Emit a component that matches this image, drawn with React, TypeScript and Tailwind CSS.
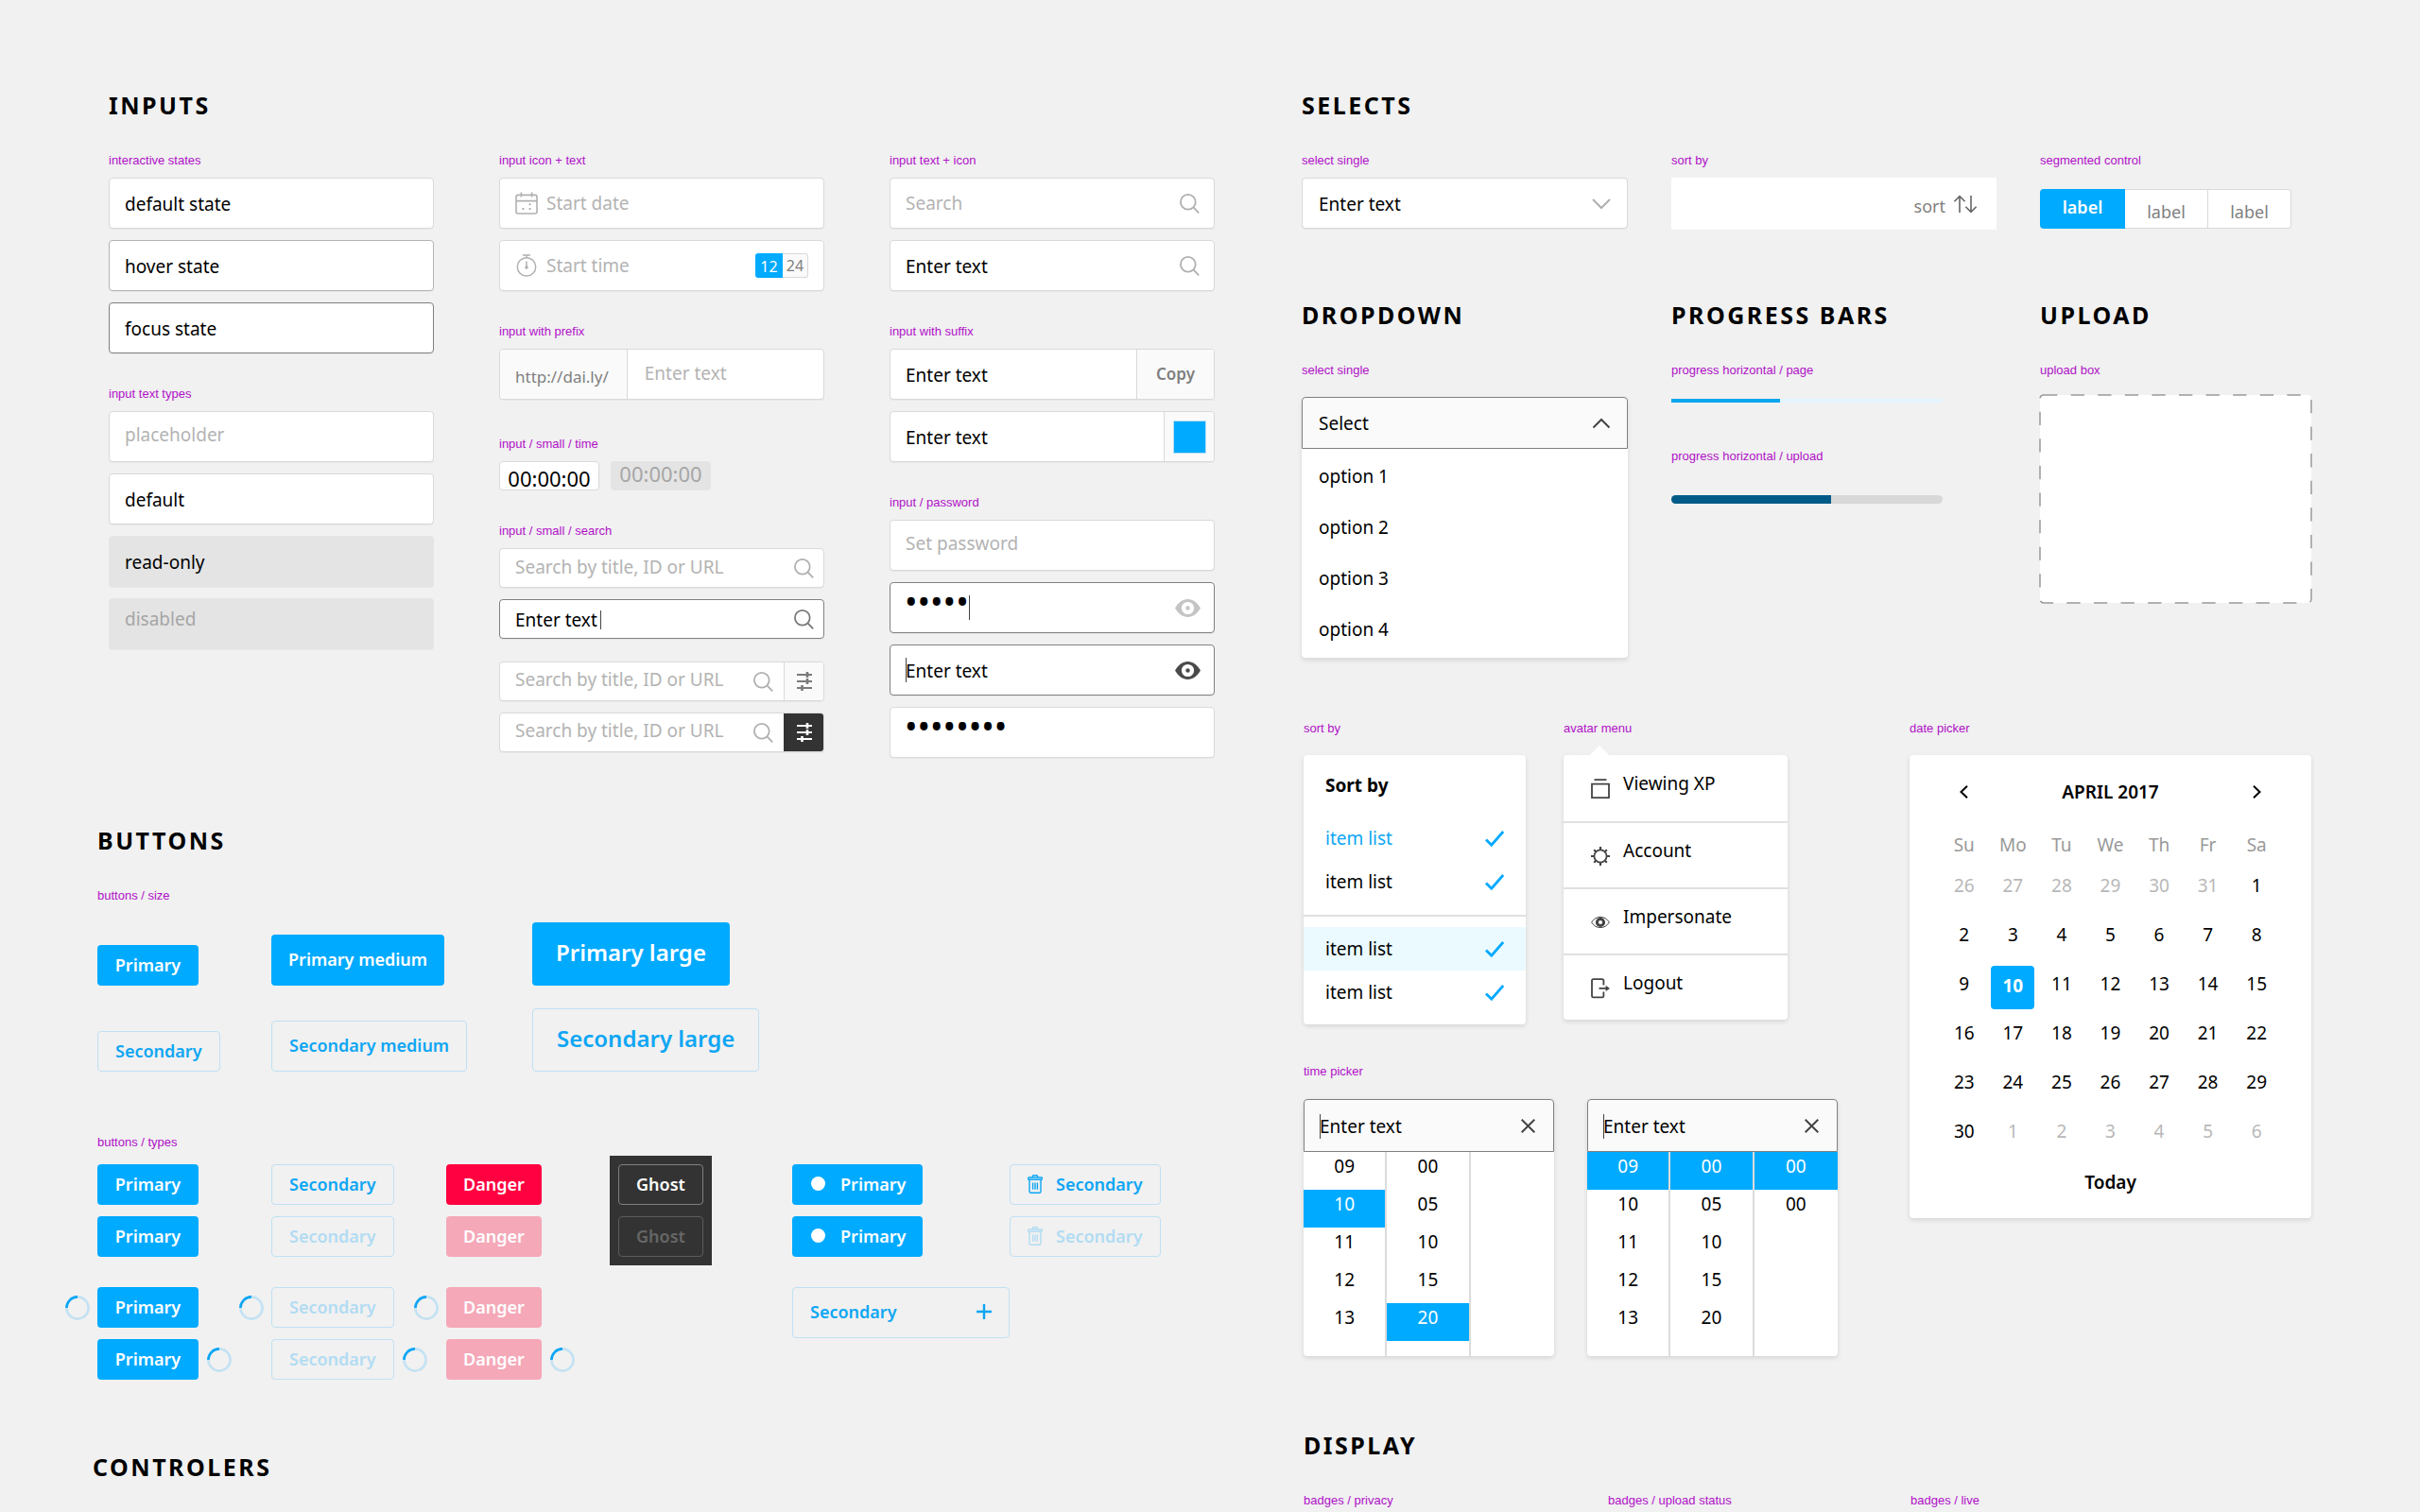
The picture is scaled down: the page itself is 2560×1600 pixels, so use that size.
import type { ReactNode } from 'react';
import clsx from 'clsx';

/* ---------- icons ---------- */

function SearchIcon({ className }: { className?: string }) {
  return (
    <svg aria-hidden viewBox="0 0 21 21" className={clsx('h-[21px] w-[21px] flex-none', className)} fill="none" stroke="currentColor" strokeWidth="1.8">
      <circle cx="8.8" cy="8.8" r="7.9" />
      <path d="M14.2 14.2l6 6.2" />
    </svg>
  );
}

function CalendarIcon() {
  return (
    <svg aria-hidden viewBox="0 0 24 24" className="h-6 w-6 flex-none text-[#b0b0b0]" fill="none" stroke="currentColor" strokeWidth="1.6">
      <rect x="1" y="3.4" width="22" height="19.6" rx="2" />
      <path d="M1 9.6h22M6.4 .6v5M17.6 .6v5" />
      <path d="M14.6 13.2h2M14.6 18h2M7.4 18h2" strokeWidth="2" />
    </svg>
  );
}

function StopwatchIcon() {
  return (
    <svg aria-hidden viewBox="0 0 24 24" className="h-6 w-6 flex-none text-[#b0b0b0]" fill="none" stroke="currentColor" strokeWidth="1.5">
      <circle cx="12" cy="13.4" r="9.7" />
      <path d="M8 1h8M12 1v3M12 7.5v6" />
      <circle cx="12" cy="14" r="1.8" fill="currentColor" stroke="none" />
    </svg>
  );
}

function SlidersIcon() {
  return (
    <svg aria-hidden viewBox="0 0 16 20" className="h-5 w-4" fill="none" stroke="currentColor" strokeWidth="2">
      <path d="M0 3h16M0 10h16M0 17h16" />
      <path d="M11 0v6M11 7v6M5.5 14v6" strokeWidth="2.6" />
    </svg>
  );
}

function EyeIcon({ className }: { className: string }) {
  return (
    <svg aria-hidden viewBox="0 0 27 19" className={clsx('h-[19px] w-[27px] flex-none', className)} fill="currentColor">
      <path
        fillRule="evenodd"
        d="M0 9.5C3.4 3.6 8 0 13.5 0S23.6 3.6 27 9.5C23.6 15.4 19 19 13.5 19S3.4 15.4 0 9.5zM13.5 2.9a6.6 6.6 0 100 13.2 6.6 6.6 0 000-13.2z"
      />
      <circle cx="13.5" cy="9.5" r="2.2" />
    </svg>
  );
}

function Chevron({ d, className }: { d: string; className: string }) {
  return (
    <svg aria-hidden viewBox="0 0 20 12" className={clsx('h-3 w-5 flex-none', className)} fill="none" stroke="currentColor" strokeWidth="2">
      <path d={d} />
    </svg>
  );
}

function CheckIcon() {
  return (
    <svg aria-hidden viewBox="0 0 20 17" className="h-[17px] w-5 text-[#00aaff]" fill="none" stroke="currentColor" strokeWidth="2.8">
      <path d="M1 9.4l5.8 5.8L19.2 1" />
    </svg>
  );
}

function TrashIcon() {
  return (
    <svg aria-hidden viewBox="0 0 16 20" className="h-5 w-4" fill="none" stroke="currentColor" strokeWidth="1.4">
      <path d="M5.4 3V1.6c0-.5.4-.9.9-.9h3.4c.5 0 .9.4.9.9V3" />
      <rect x=".7" y="3" width="14.6" height="2.2" rx=".6" />
      <path d="M2 5.4v12.4c0 .9.6 1.5 1.5 1.5h9c.9 0 1.500-.6 1.500-1.500V5.400M5.600 8.400v7.400M8 8.400v7.400M10.400 8.400v7.400" />
    </svg>
  );
}

function Spinner() {
  return (
    <svg aria-hidden viewBox="0 0 26 26" className="h-[26px] w-[26px] flex-none" fill="none" strokeWidth="2.6">
      <circle cx="13" cy="13" r="11.6" stroke="#c3e2f3" />
      <path d="M1.4 13A11.6 11.6 0 0113 1.4" stroke="#0ba6f5" />
    </svg>
  );
}

const menuIcons: Record<string, ReactNode> = {
  'Viewing XP': <path d="M3.5 1.2h13M1 5.6h18v14.6H1z" strokeWidth="1.8" />,
  Account: (
    <>
      <circle cx="10" cy="11" r="6.6" strokeWidth="1.8" />
      <path d="M10 1v3M10 18v3M0 11h3M17 11h3M3.2 4.2l2 2M14.8 15.8l2 2M16.8 4.2l-2 2M5.2 15.8l-2 2" strokeWidth="2.2" />
    </>
  ),
  Impersonate: (
    <>
      <path d="M.6 11C3 7.3 6.2 5.400 10 5.400s7 1.900 9.400 5.600C17 14.700 13.800 16.600 10 16.600S3 14.700 .6 11z" strokeWidth="1" />
      <circle cx="10" cy="11" r="3.600" strokeWidth="3" />
    </>
  ),
  Logout: (
    <>
      <path d="M13.400 7.400V2.600c0-.9-.6-1.500-1.500-1.500H2.500C1.600 1.100 1 1.700 1 2.600v16.300c0 .9.6 1.500 1.500 1.500h9.400c.9 0 1.500-.6 1.500-1.500v-4.500" strokeWidth="1.8" />
      <path d="M8.500 10.900h8" strokeWidth="1.8" />
      <path d="M15.600 7.700l4.400 3.200-4.400 3.200z" fill="currentColor" stroke="none" />
    </>
  ),
};

/* ---------- shared pieces ---------- */

function Heading({ children }: { children: ReactNode }) {
  return <h2 className="mb-[35px] text-[25px] leading-8 font-bold tracking-widest text-black">{children}</h2>;
}

function Caption({ children, className = 'mb-[10px]' }: { children: ReactNode; className?: string }) {
  return <p className={clsx("font-['Liberation_Sans',sans-serif] text-[13px] leading-4 text-[#b010c8]", className)}>{children}</p>;
}

function Group({ caption, className, captionClass, children }: { caption: string; className?: string; captionClass?: string; children: ReactNode }) {
  return (
    <div className={className}>
      <Caption className={captionClass}>{caption}</Caption>
      {children}
    </div>
  );
}

const tones = {
  normal: 'border-[#d9d9d9] bg-white',
  hover: 'border-[#b3b3b3] bg-white',
  focus: 'border-[#808080] bg-white',
  muted: 'border-[#e4e4e4] bg-[#e4e4e4]',
};

/** Bordered shell; the input inside grows to fill it. */
function Field({ tone = 'normal', small, children }: { tone?: keyof typeof tones; small?: boolean; children: ReactNode }) {
  return (
    <div className={clsx('relative flex items-stretch overflow-hidden rounded-[4px] border shadow-[0_1px_0_rgba(0,0,0,0.04)]', small ? 'h-[42px]' : 'h-[54px]', tones[tone])}>
      {children}
    </div>
  );
}

type TextProps = { label: string; value?: string; placeholder?: string; type?: string; className?: string; disabled?: boolean; readOnly?: boolean };

function Text({ label, value, placeholder, type = 'text', className = 'pt-0.5 pl-4', disabled, readOnly }: TextProps) {
  return (
    <input
      type={type}
      aria-label={label}
      defaultValue={value}
      placeholder={placeholder}
      disabled={disabled}
      readOnly={readOnly}
      className={clsx('min-w-0 flex-1 bg-transparent outline-none placeholder:text-[#b3b3b3] placeholder:opacity-100', className)}
    />
  );
}

function Caret({ className }: { className: string }) {
  return <span aria-hidden className={clsx('absolute w-px bg-[#444]', className)} />;
}

/* ---------- inputs ---------- */

function Inputs() {
  return (
    <section className="pl-[17px]">
      <Heading>INPUTS</Heading>
      <div className="grid grid-cols-3 gap-[69px]">
        <div>
          <Group caption="interactive states">
            <div className="flex flex-col gap-3">
              <Field><Text label="Default" value="default state" /></Field>
              <Field tone="hover"><Text label="Hover" value="hover state" /></Field>
              <Field tone="focus"><Text label="Focus" value="focus state" /></Field>
            </div>
          </Group>
          <Group caption="input text types" className="mt-[35px]">
            <div className="flex flex-col gap-3">
              <Field><Text label="Placeholder" placeholder="placeholder" className="pb-1 pl-4" /></Field>
              <Field><Text label="Default type" value="default" /></Field>
              <Field tone="muted"><Text label="Read-only" value="read-only" readOnly /></Field>
              <Field tone="muted"><Text label="Disabled" value="disabled" disabled className="pb-2.5 pl-4 text-[#a6a6a6]" /></Field>
            </div>
          </Group>
        </div>

        <div>
          <Group caption="input icon + text">
            <div className="flex flex-col gap-3">
              <Field>
                <div className="flex min-w-0 flex-1 items-center gap-[9px] px-4">
                  <CalendarIcon />
                  <Text label="Start date" placeholder="Start date" className="" />
                </div>
              </Field>
              <Field>
                <div className="flex min-w-0 flex-1 items-center gap-[9px] px-4">
                  <StopwatchIcon />
                  <Text label="Start time" placeholder="Start time" className="" />
                  <div className="flex h-[26px] flex-none text-base leading-6">
                    <button type="button" className="w-[29px] rounded-l-[3px] bg-[#00aaff] pt-0.5 text-white">12</button>
                    <button type="button" className="w-[27px] rounded-r-[3px] border border-l-0 border-[#d9d9d9] bg-[#fafafa] text-[#7f7f7f]">24</button>
                  </div>
                </div>
              </Field>
            </div>
          </Group>
          <Group caption="input with prefix" className="mt-[35px]">
            <Field>
              <span className="flex items-center border-r border-[#d9d9d9] bg-[#fafafa] pt-1.5 pr-[19px] pl-4 text-[17px] text-[#7f7f7f]">http://dai.ly/</span>
              <Text label="Path" placeholder="Enter text" className="pb-0.5 pl-[18px]" />
            </Field>
          </Group>
          <Group caption="input / small / time" className="mt-[39px]">
            <div className="flex gap-3 text-[22px]">
              <input aria-label="Time" defaultValue="00:00:00" className="h-[31px] w-[106px] rounded-[4px] border border-[#d9d9d9] bg-white pt-1 text-center outline-none" />
              <input aria-label="Time disabled" defaultValue="00:00:00" disabled className="h-[31px] w-[106px] rounded-[4px] bg-[#e4e4e4] pb-1.5 text-center text-[#a6a6a6] outline-none" />
            </div>
          </Group>
          <Group caption="input / small / search" className="mt-[35px]">
            <div className="flex flex-col gap-3">
              <Field small>
                <Text label="Search" placeholder="Search by title, ID or URL" className="pb-0.5 pl-4" />
                <SearchIcon className="mr-[10px] self-center text-[#b0b0b0]" />
              </Field>
              <Field small tone="focus">
                <Text label="Search focused" value="Enter text" className="pt-0.5 pl-4" />
                <Caret className="top-[11px] left-[106px] h-5" />
                <SearchIcon className="mr-[10px] self-center text-[#7a7a7a]" />
              </Field>
            </div>
            <div className="mt-6 flex flex-col gap-3">
              <Field small>
                <Text label="Search with filter" placeholder="Search by title, ID or URL" className="pb-1 pl-4" />
                <SearchIcon className="mr-[11px] self-center text-[#b0b0b0]" />
                <button type="button" aria-label="Filter" className="grid w-[42px] place-items-center border-l border-[#d9d9d9] bg-[#fafafa] text-[#7a7a7a]">
                  <SlidersIcon />
                </button>
              </Field>
              <Field small>
                <Text label="Search with active filter" placeholder="Search by title, ID or URL" className="pb-1 pl-4" />
                <SearchIcon className="mr-[11px] self-center text-[#b0b0b0]" />
                <button type="button" aria-label="Filter active" className="-my-px -mr-px grid w-[43px] place-items-center bg-[#333] text-white">
                  <SlidersIcon />
                </button>
              </Field>
            </div>
          </Group>
        </div>

        <div>
          <Group caption="input text + icon">
            <div className="flex flex-col gap-3">
              <Field>
                <Text label="Search text" placeholder="Search" className="pl-4" />
                <SearchIcon className="mr-[15px] self-center text-[#b0b0b0]" />
              </Field>
              <Field>
                <Text label="Search value" value="Enter text" />
                <SearchIcon className="mr-[15px] self-center text-[#b0b0b0]" />
              </Field>
            </div>
          </Group>
          <Group caption="input with suffix" className="mt-[35px]">
            <div className="flex flex-col gap-3">
              <Field>
                <Text label="Link" value="Enter text" />
                <button type="button" className="w-[82px] border-l border-[#d9d9d9] bg-[#fafafa] text-[17px] font-semibold text-[#7f7f7f]">Copy</button>
              </Field>
              <Field>
                <Text label="Color" value="Enter text" />
                <button type="button" aria-label="Pick color" className="grid w-[53px] place-items-center border-l border-[#d9d9d9] bg-[#fafafa]">
                  <span className="h-[35px] w-[35px] border border-[#b5dff5] bg-[#00aaff]" />
                </button>
              </Field>
            </div>
          </Group>
          <Group caption="input / password" className="mt-[35px]">
            <div className="flex flex-col gap-3">
              <Field><Text label="Set password" placeholder="Set password" className="pb-1 pl-4" /></Field>
              <Field tone="focus">
                <Text label="Password typing" type="password" value="12345" className="pb-3 pl-[15px] text-4xl" />
                <Caret className="top-[13px] left-[83px] h-[26px]" />
                <EyeIcon className="mr-[14px] self-center text-[#c4c4c4]" />
              </Field>
              <Field tone="focus">
                <Text label="Password shown" value="Enter text" />
                <Caret className="top-[13px] left-4 h-[26px]" />
                <EyeIcon className="mr-[14px] self-center text-[#4a4a4a]" />
              </Field>
              <Field><Text label="Password" type="password" value="12345678" className="pb-3 pl-[15px] text-4xl" /></Field>
            </div>
          </Group>
        </div>
      </div>
    </section>
  );
}

/* ---------- buttons ---------- */

const variants = {
  primary: 'min-w-[107px] bg-[#00aaff] text-white',
  secondary: 'border border-[#bfe1f3] text-[#0ea6f4]',
  secondaryOff: 'border border-[#bfe1f3] text-[#b2dcf3]',
  danger: 'bg-[#ff0040] text-white',
  dangerOff: 'bg-[#f5a8b8] text-white',
  ghost: 'border border-[#808080] text-white',
  ghostOff: 'border border-[#5c5c5c] text-[#666]',
};

const sizes = {
  small: 'h-[43px] px-[18px] pb-0.5 text-[18px]',
  medium: 'h-[54px] px-[18px] pb-0.5 text-[18px]',
  large: 'h-[67px] px-[25px] pb-1 text-2xl',
};

function Button({ variant = 'primary', size = 'small', justify = 'justify-center', className, disabled, children }: {
  variant?: keyof typeof variants;
  size?: keyof typeof sizes;
  justify?: string;
  className?: string;
  disabled?: boolean;
  children: ReactNode;
}) {
  return (
    <button
      type="button"
      disabled={disabled}
      className={clsx('flex items-center rounded-[4px] font-semibold whitespace-nowrap', justify, variants[variant], sizes[size], className)}
    >
      {children}
    </button>
  );
}

/** Normal + disabled, then loading with the spinner before and after. */
function TypeStack({ on, off, children }: { on: keyof typeof variants; off: keyof typeof variants; children: string }) {
  return (
    <div className="flex flex-col items-start gap-3">
      <Button variant={on}>{children}</Button>
      <Button variant={off} disabled>{children}</Button>
      <div className="-ml-[34px] flex items-center gap-2 pt-5">
        <Spinner />
        <Button variant={off} disabled>{children}</Button>
      </div>
      <div className="flex items-center gap-[9px]">
        <Button variant={off} disabled>{children}</Button>
        <Spinner />
      </div>
    </div>
  );
}

function Buttons() {
  return (
    <section className="mt-[71px] pl-[5px]">
      <Heading>BUTTONS</Heading>
      <Group caption="buttons / size" captionClass="mb-5">
        <div className="grid grid-cols-[184px_276px_auto] items-end justify-items-start gap-y-6">
          <Button>Primary</Button>
          <Button size="medium">Primary medium</Button>
          <Button size="large">Primary large</Button>
          <Button variant="secondary">Secondary</Button>
          <Button variant="secondary" size="medium">Secondary medium</Button>
          <Button variant="secondary" size="large">Secondary large</Button>
        </div>
      </Group>
      <Group caption="buttons / types" className="mt-[67px]" captionClass="mb-[15px]">
        <div className="grid grid-cols-[184px_185px_173px_193px_230px_auto] items-start">
          <TypeStack on="primary" off="primary">Primary</TypeStack>
          <TypeStack on="secondary" off="secondaryOff">Secondary</TypeStack>
          <TypeStack on="danger" off="dangerOff">Danger</TypeStack>
          <div className="-mt-[9px] flex w-fit flex-col gap-3 bg-[#333] p-[9px]">
            <Button variant="ghost">Ghost</Button>
            <Button variant="ghostOff" disabled>Ghost</Button>
          </div>
          <div className="flex flex-col items-start gap-3">
            {[0, 1].map((i) => (
              <Button key={i} disabled={i === 1}>
                <span className="mr-4 ml-0.5 h-[15px] w-[15px] rounded-full bg-white" />
                Primary
              </Button>
            ))}
            <Button variant="secondary" size="medium" justify="justify-between" className="mt-5 w-full">
              Secondary
              <svg aria-hidden viewBox="0 0 16 16" className="h-4 w-4" stroke="currentColor" strokeWidth="2.4">
                <path d="M8 0v16M0 8h16" />
              </svg>
            </Button>
          </div>
          <div className="flex flex-col items-start gap-3">
            <Button variant="secondary">
              <span className="mr-[14px]"><TrashIcon /></span>
              Secondary
            </Button>
            <Button variant="secondaryOff" disabled>
              <span className="mr-[14px]"><TrashIcon /></span>
              Secondary
            </Button>
          </div>
        </div>
      </Group>
    </section>
  );
}

/* ---------- selects, dropdown, progress, upload ---------- */

function Selects() {
  return (
    <section>
      <Heading>SELECTS</Heading>
      <div className="grid grid-cols-[345fr_344fr_287fr] gap-[46px]">
        <Group caption="select single">
          <Field>
            <select aria-label="Select single" className="flex-1 appearance-none bg-transparent pt-0.5 pl-[17px] outline-none">
              <option>Enter text</option>
            </select>
            <Chevron d="M1 1l9 9 9-9" className="absolute top-[21px] right-[17px] text-[#b0b0b0]" />
          </Field>
        </Group>
        <Group caption="sort by">
          <button type="button" className="flex h-[55px] w-full items-center justify-end gap-2 bg-white pr-5 text-[18px] text-[#7f7f7f]">
            <span className="pt-1">sort</span>
            <svg aria-hidden viewBox="0 0 26 20" className="h-5 w-[26px] text-[#666]" fill="none" stroke="currentColor" strokeWidth="1.6">
              <path d="M7 19V1.600M1.400 7.200L7 1.600l5.600 5.600M19 1v17.400M13.400 12.800l5.600 5.600 5.600-5.600" />
            </svg>
          </button>
        </Group>
        <Group caption="segmented control">
          <div className="mt-[22px] flex h-[42px] text-[18px] text-[#7f7f7f]">
            <button type="button" className="w-[90px] rounded-l-[4px] bg-[#00aaff] pb-1 font-semibold text-white">label</button>
            <button type="button" className="w-[88px] border-y border-r border-[#d9d9d9] bg-white pt-1.5">label</button>
            <button type="button" className="w-[88px] rounded-r-[4px] border-y border-r border-[#d9d9d9] bg-white pt-1.5">label</button>
          </div>
        </Group>
      </div>
    </section>
  );
}

function ProgressBar({ label, percent, className, fillClass }: { label: string; percent: number; className: string; fillClass: string }) {
  return (
    <div role="progressbar" aria-label={label} aria-valuenow={percent} className={clsx('w-5/6 overflow-hidden', className)}>
      <div className={clsx('h-full', fillClass)} style={{ width: `${percent}%` }} />
    </div>
  );
}

function DropdownRow() {
  return (
    <div className="mt-[74px] grid grid-cols-[345fr_344fr_287fr] gap-[46px]">
      <section>
        <Heading>DROPDOWN</Heading>
        <Group caption="select single" captionClass="mb-5">
          <div className="rounded-[4px] bg-white shadow-[0_3px_5px_rgba(0,0,0,0.1)]">
            <button type="button" aria-expanded="true" className="flex h-[55px] w-full items-center justify-between rounded-t-[4px] border border-[#808080] bg-[#fafafa] pr-[17px] pl-[17px]">
              Select
              <Chevron d="M1.500 10.500l8.500-8.500 8.500 8.500" className="text-[#444]" />
            </button>
            <ul role="listbox" className="pt-0.5 pb-[3px]">
              {['option 1', 'option 2', 'option 3', 'option 4'].map((o) => (
                <li key={o} role="option" aria-selected="false" className="flex h-[54px] items-center pl-[18px]">{o}</li>
              ))}
            </ul>
          </div>
        </Group>
      </section>
      <section>
        <Heading>PROGRESS BARS</Heading>
        <Group caption="progress horizontal / page" captionClass="mb-[22px]">
          <ProgressBar label="Page" percent={40} className="h-1 bg-[#e3f4ff]" fillClass="bg-[#0ba6f0]" />
        </Group>
        <Group caption="progress horizontal / upload" className="mt-[49px]" captionClass="mb-[33px]">
          <ProgressBar label="Upload" percent={59} className="h-[9px] rounded-full bg-[#d8d8d8]" fillClass="bg-[#005a87]" />
        </Group>
      </section>
      <section>
        <Heading>UPLOAD</Heading>
        <Group caption="upload box" captionClass="mb-[18px]">
          <label className="relative block h-[220px] cursor-pointer rounded-[4px] bg-white">
            <input type="file" aria-label="Upload file" className="sr-only" />
            <svg aria-hidden className="absolute inset-0 h-full w-full overflow-visible" fill="none" stroke="#999" strokeWidth="1.5" strokeDasharray="14.300 14.300">
              <rect x="0" y="0" width="100%" height="100%" rx="4" />
            </svg>
          </label>
        </Group>
      </section>
    </div>
  );
}

/* ---------- menus and pickers ---------- */

const cardShadow = 'shadow-[0_2px_5px_rgba(0,0,0,0.12)]';

function SortItem({ className }: { className?: string }) {
  return (
    <li className={clsx('flex h-[46px] items-center justify-between px-[23px]', className)}>
      item list
      <CheckIcon />
    </li>
  );
}

function SortMenu() {
  return (
    <div className={clsx('w-[235px] rounded-[4px] bg-white pt-4 pb-[11px]', cardShadow)}>
      <h3 className="mb-[17px] px-[23px] leading-8 font-bold">Sort by</h3>
      <ul>
        <SortItem className="text-[#0ea6f4]" />
        <SortItem />
      </ul>
      <hr className="mt-3 mb-[11px] border-t-2 border-[#e0e0e0]" />
      <ul>
        <SortItem className="bg-[#eafaff]" />
        <SortItem />
      </ul>
    </div>
  );
}

function AvatarMenu() {
  return (
    <nav className={clsx('relative w-[237px] rounded-[4px] bg-white', cardShadow)}>
      <svg aria-hidden viewBox="0 0 20 10" className="absolute bottom-full left-7 h-[10px] w-5" fill="#fff">
        <path d="M0 10L10 0l10 10z" />
      </svg>
      {Object.entries(menuIcons).map(([name, icon], i) => (
        <a key={name} href="#" className={clsx('flex h-[70px] items-center gap-[14px] pt-0.5 pl-[29px]', i > 0 && 'border-t-2 border-[#e0e0e0]')}>
          <svg aria-hidden viewBox="0 0 20 22" className="h-[22px] w-5 text-[#444]" fill="none" stroke="currentColor">{icon}</svg>
          <span className="pb-3">{name}</span>
        </a>
      ))}
    </nav>
  );
}

function TimePicker({ label, columns }: { label: string; columns: { values: string[]; active?: string }[] }) {
  return (
    <div className={clsx('w-[265px] rounded-[4px] bg-white', cardShadow)}>
      <div className="relative flex h-14 items-center rounded-t-[4px] border border-[#808080] bg-[#fafafa] pr-[19px]">
        <Text label={label} value="Enter text" />
        <Caret className="top-[15px] left-4 h-[26px]" />
        <button type="button" aria-label={`Clear ${label}`}>
          <svg aria-hidden viewBox="0 0 15 15" className="h-[15px] w-[15px] text-[#444]" stroke="currentColor" strokeWidth="2">
            <path d="M.7 .7l13.600 13.600M14.300 .7L.7 14.300" />
          </svg>
        </button>
      </div>
      <div className="grid h-[216px] grid-cols-3 divide-x-2 divide-[#dcdcdc]">
        {columns.map((col, c) => (
          <div key={c} className="flex flex-col">
            {col.values.map((v, i) => (
              <button key={i} type="button" className={clsx('h-10 flex-none pb-2.5', v === col.active && i === col.values.indexOf(v) && 'bg-[#00aaff] text-white')}>
                {v}
              </button>
            ))}
          </div>
        ))}
      </div>
    </div>
  );
}

const hours = ['09', '10', '11', '12', '13'];
const minutes = ['00', '05', '10', '15', '20'];

const weekdays = ['Su', 'Mo', 'Tu', 'We', 'Th', 'Fr', 'Sa'];
const weeks = [
  [26, 27, 28, 29, 30, 31, 1],
  [2, 3, 4, 5, 6, 7, 8],
  [9, 10, 11, 12, 13, 14, 15],
  [16, 17, 18, 19, 20, 21, 22],
  [23, 24, 25, 26, 27, 28, 29],
  [30, 1, 2, 3, 4, 5, 6],
];

function DatePicker() {
  return (
    <div className={clsx('w-[425px] rounded-[4px] bg-white px-8 pb-[14px]', cardShadow)}>
      <div className="flex h-[73px] items-center justify-between px-[21px] pt-1">
        <button type="button" aria-label="Previous month">
          <svg aria-hidden viewBox="0 0 9 14" className="h-[14px] w-[9px]" fill="none" stroke="#000" strokeWidth="2">
            <path d="M8 .8L1.500 7 8 13.200" />
          </svg>
        </button>
        <h3 className="font-semibold">APRIL 2017</h3>
        <button type="button" aria-label="Next month">
          <svg aria-hidden viewBox="0 0 9 14" className="h-[14px] w-[9px]" fill="none" stroke="#000" strokeWidth="2">
            <path d="M1 .8L7.500 7 1 13.200" />
          </svg>
        </button>
      </div>
      <table className="w-full table-fixed text-center">
        <thead>
          <tr className="h-[43px] text-[#999]">
            {weekdays.map((d) => <th key={d} scope="col" className="p-0 font-normal">{d}</th>)}
          </tr>
        </thead>
        <tbody>
          {weeks.map((week, w) => (
            <tr key={w} className="h-[52px]">
              {week.map((d, i) => {
                const outside = (w === 0 && d > 7) || (w === 5 && d < 7);
                if (w === 2 && d === 10) {
                  return (
                    <td key={i} className="p-0">
                      <button type="button" className="mx-auto block h-[46px] w-[46px] rounded-[4px] bg-[#00aaff] pb-1 font-bold text-white">{d}</button>
                    </td>
                  );
                }
                return (
                  <td key={i} className={clsx('p-0 pb-[9px]', outside ? 'text-[#b8b8b8]' : 'text-black')}>
                    <button type="button">{d}</button>
                  </td>
                );
              })}
            </tr>
          ))}
        </tbody>
      </table>
      <button type="button" className="block h-12 w-full font-semibold">Today</button>
    </div>
  );
}

function Pickers() {
  return (
    <section className="mt-[67px] flex items-start justify-between pl-0.5">
      <div>
        <div className="flex items-start gap-10">
          <Group caption="sort by" captionClass="mb-5"><SortMenu /></Group>
          <Group caption="avatar menu" captionClass="mb-5"><AvatarMenu /></Group>
        </div>
        <Group caption="time picker" className="mt-[42px]" captionClass="mb-[21px]">
          <div className="flex gap-[35px]">
            <TimePicker label="Start" columns={[{ values: hours, active: '10' }, { values: minutes, active: '20' }, { values: [] }]} />
            <TimePicker label="End" columns={[{ values: hours, active: '09' }, { values: minutes, active: '00' }, { values: ['00', '00'], active: '00' }]} />
          </div>
        </Group>
      </div>
      <Group caption="date picker" captionClass="mb-5"><DatePicker /></Group>
    </section>
  );
}

export default function App() {
  return (
    <main className="grid min-h-screen grid-cols-[1187fr_1068fr] gap-[92px] bg-[#f1f1f1] pt-[95px] pr-[115px] pl-[98px] font-['Noto_Sans',sans-serif] text-[19px] leading-7 text-black">
      <div>
        <Inputs />
        <Buttons />
        <section className="mt-[76px]">
          <h2 className="text-[25px] leading-8 font-bold tracking-widest">CONTROLERS</h2>
        </section>
      </div>
      <div>
        <Selects />
        <DropdownRow />
        <Pickers />
        <section className="mt-[78px] pl-0.5">
          <Heading>DISPLAY</Heading>
          <div className="grid grid-cols-[322px_320px_auto]">
            <Caption className="">badges / privacy</Caption>
            <Caption className="">badges / upload status</Caption>
            <Caption className="">badges / live</Caption>
          </div>
        </section>
      </div>
    </main>
  );
}
